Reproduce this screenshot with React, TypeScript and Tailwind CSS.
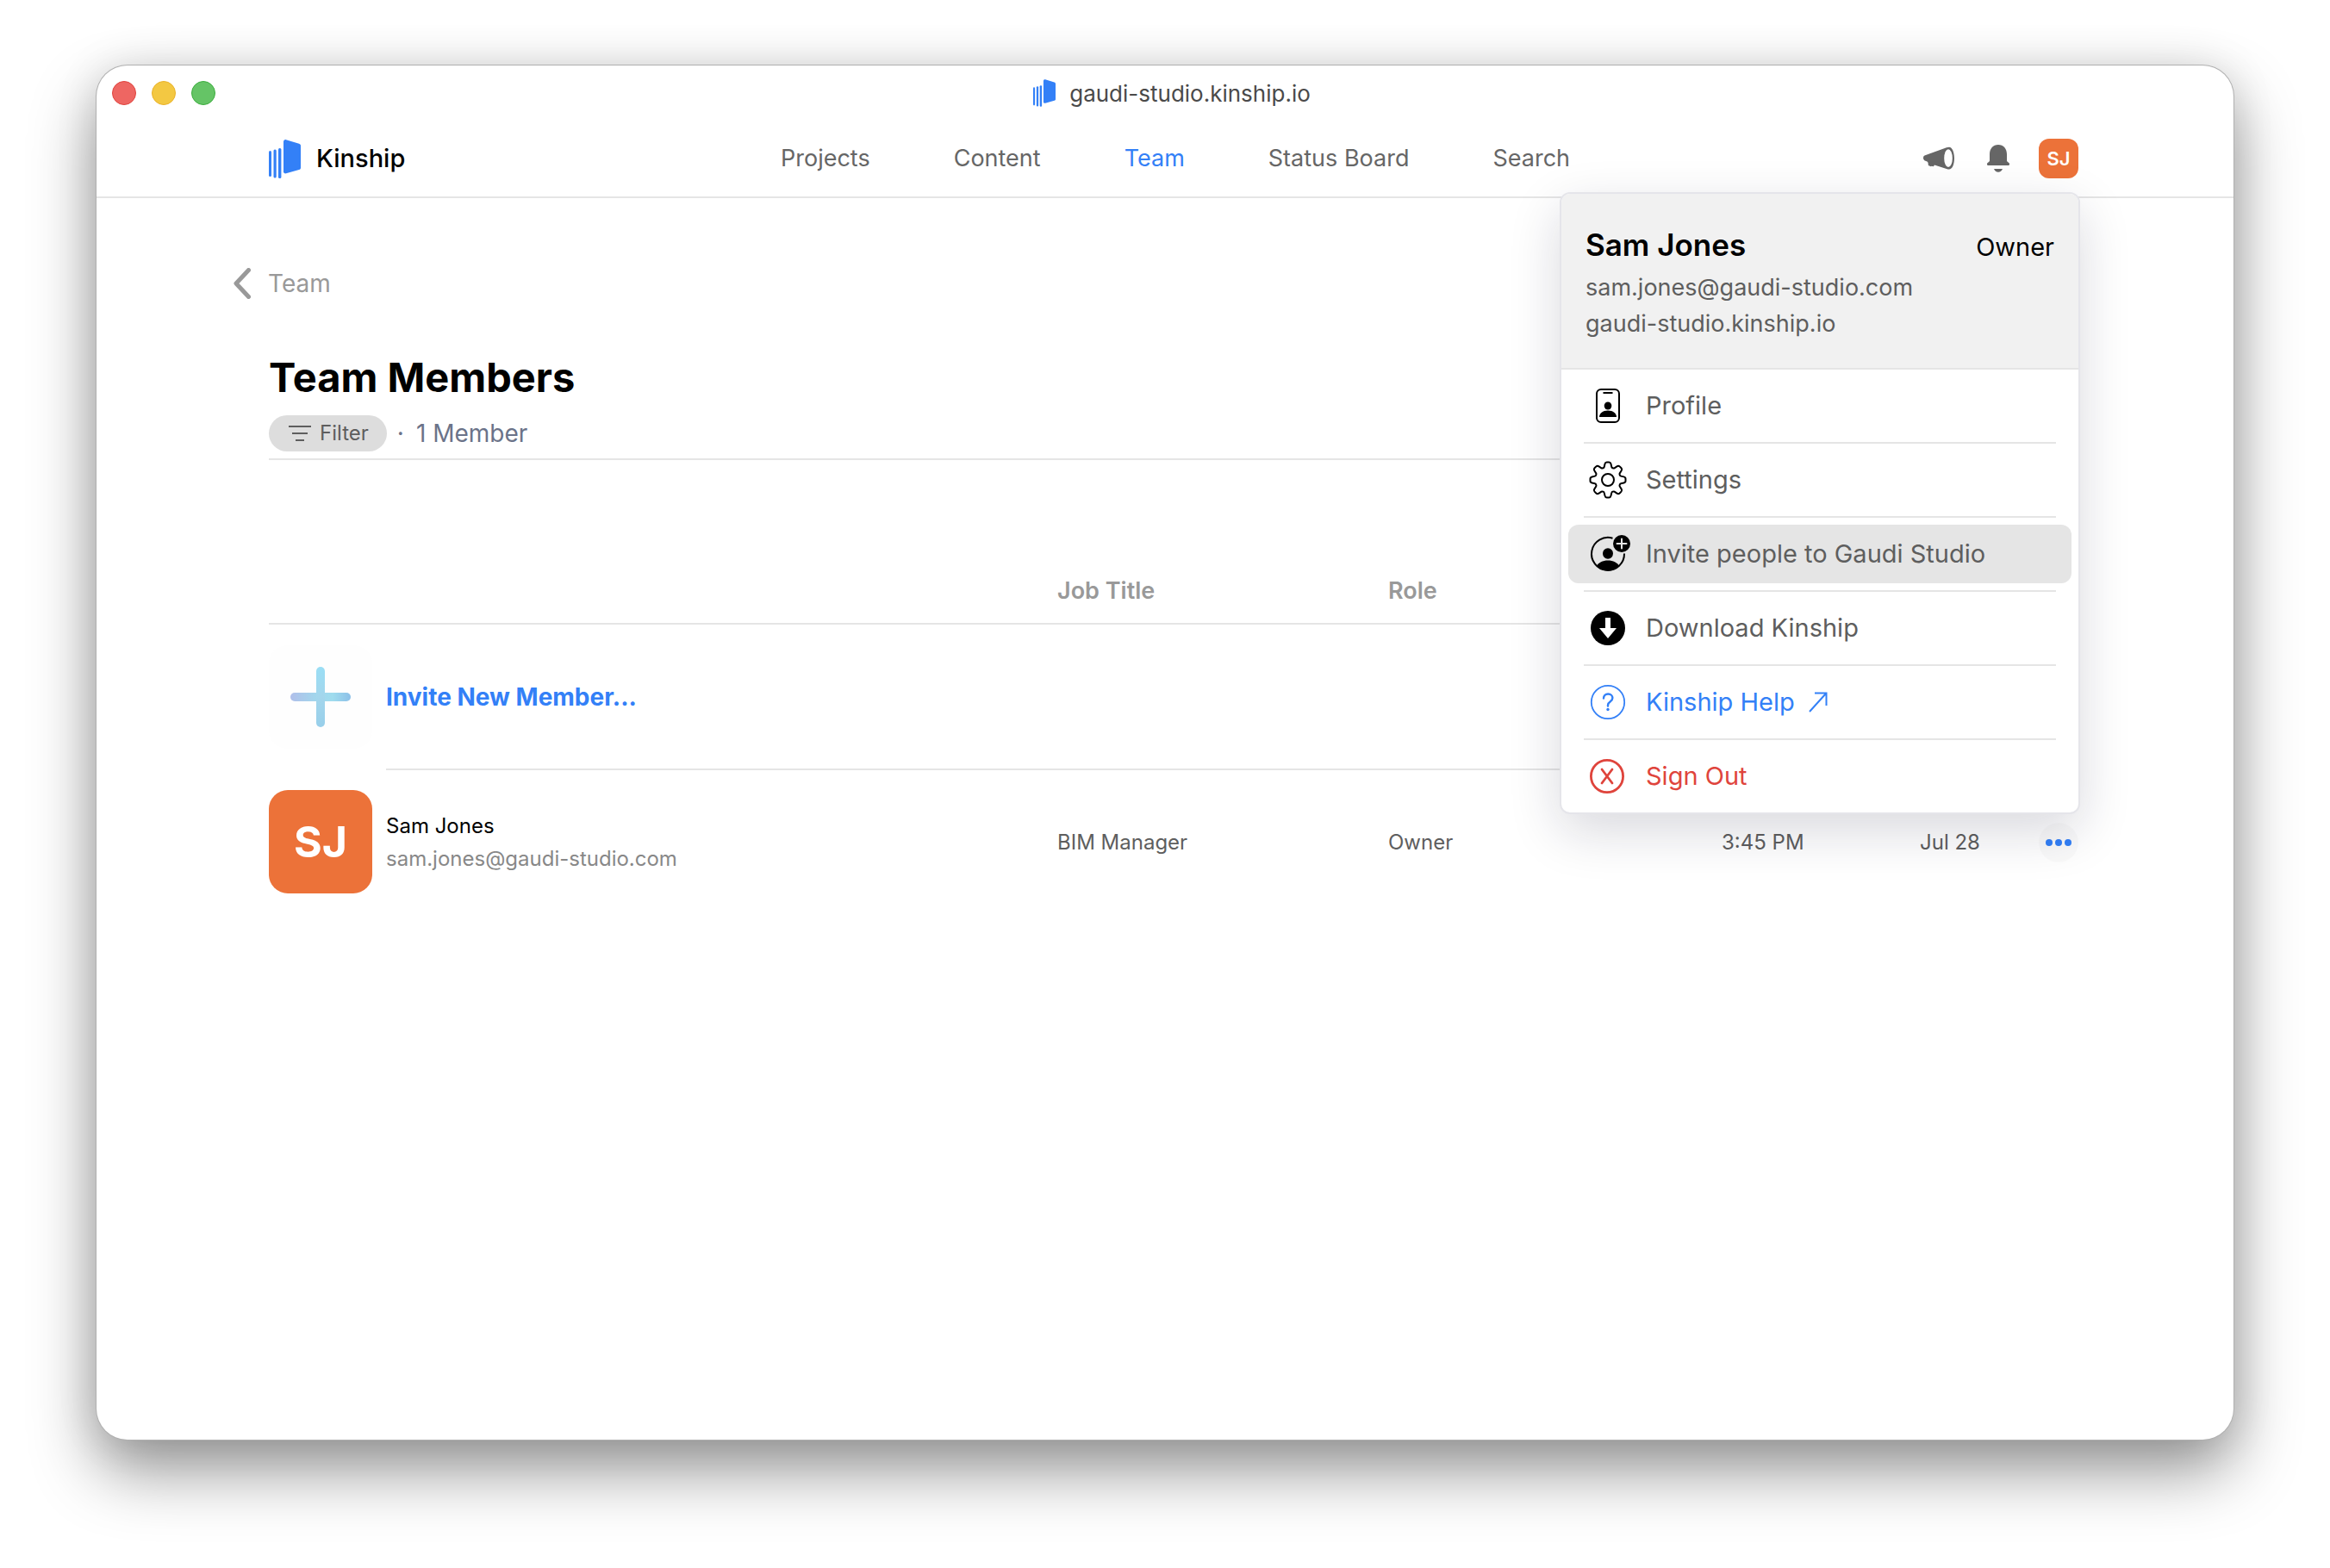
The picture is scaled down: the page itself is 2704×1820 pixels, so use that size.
import type { ReactNode } from "react";

type MenuItem = {
    label: string;
    icon: ReactNode;
    color: string;
    active?: boolean;
    external?: boolean;
};

const navLinks = ["Projects", "Content", "Team", "Status Board", "Search"];

function KinshipLogo({ className }: { className: string }) {
    return (
        <svg viewBox="0 0 37 45" className={className} fill="#3380f7" aria-hidden="true">
            <rect x="0" y="13" width="3" height="30" rx="1.5" />
            <rect x="5.5" y="11.500" width="3.200" height="33" rx="1.5" />
            <rect x="11" y="10" width="3.400" height="35" rx="1.5" />
            <path d="M17 2.500C17 .8 18.500-.2 20 .2L35 4.800C36.300 5.200 37 6 37 7.300V32.500C37 33.800 36.300 34.700 35 35.100L20 39.300C18.500 39.700 17 38.800 17 37.200Z" />
        </svg>
    );
}

function MegaphoneIcon() {
    return (
        <svg viewBox="0 0 36 28" className="w-9 h-7" aria-hidden="true">
            <path d="M1.500 10.500 27 1.300C28 1 29 .8 30 .8c3.500 0 6 5.700 6 13s-2.500 12.800-6 12.800c-1 0-2-.2-3-.6L13 21.500l-1.200 1.800-2-.6-.9.500-3-1.300-.4-3.200-1-1.300-2-.6C.8 16 0 14.900 0 13.500c0-1.500.5-2.600 1.500-3Z" fill="#666" />
            <ellipse cx="29" cy="13.700" rx="4.800" ry="10.400" fill="#fff" />
        </svg>
    );
}

function BellIcon() {
    return (
        <svg viewBox="0 0 26 32" className="w-[26px] h-8" fill="#666" aria-hidden="true">
            <path d="M3 11C3 4.500 7 0 13 0s10 4.500 10 11v7c0 1 .3 1.500 1 2l1.300 1c1.300 1.200.7 3-.8 3h-23c-1.500 0-2.100-1.800-.8-3L2 20c.7-.5 1-1 1-2Z" />
            <path d="M8 28h10c-.8 2.300-2.800 3.800-5 3.800S8.800 30.300 8 28Z" />
        </svg>
    );
}

function BadgeIcon() {
    return (
        <svg viewBox="0 0 48 48" className="w-12 h-12" fill="none" aria-hidden="true">
            <rect x="11" y="5" width="26" height="38" rx="5" stroke="#000" strokeWidth="2" />
            <path d="M18.500 9h11" stroke="#000" strokeWidth="2" />
            <ellipse cx="24" cy="24" rx="4.300" ry="4.600" fill="#000" />
            <path d="M14 37c0-4 4-7.500 10-7.500S34 33 34 37Z" fill="#000" />
        </svg>
    );
}

function GearIcon() {
    return (
        <svg viewBox="0 0 48 48" className="w-12 h-12" fill="none" stroke="#000" strokeWidth="2" strokeLinejoin="round" aria-hidden="true">
            <path d="M20.500 5.500c.3-1.300 1-2 2.200-2h2.600c1.200 0 1.900.7 2.200 2l.8 3.500c.2 1 2.300 1.900 3.200 1.300l3-2c1.200-.8 2.200-.7 3.100.1l1.900 1.900c.9.900.9 1.900.2 3l-2 3.100c-.6.900.3 3 1.300 3.200l3.400.8c1.400.3 2.100 1 2.100 2.300v2.600c0 1.200-.7 1.900-2.100 2.200l-3.400.8c-1 .2-1.900 2.300-1.300 3.200l2 3.100c.7 1.100.7 2.100-.2 3l-1.900 1.900c-.9.800-1.900.9-3.100.1l-3-2c-.9-.6-3 .3-3.200 1.300l-.8 3.500c-.3 1.300-1 2-2.200 2h-2.600c-1.200 0-1.900-.7-2.200-2l-.8-3.500c-.2-1-2.300-1.900-3.200-1.300l-3 2c-1.200.8-2.200.7-3.100-.1l-1.900-1.900c-.9-.9-.9-1.900-.2-3l2-3.100c.6-.9-.3-3-1.300-3.200l-3.400-.8c-1.400-.3-2.100-1-2.100-2.200v-2.600c0-1.300.7-2 2.100-2.300l3.400-.8c1-.2 1.900-2.300 1.300-3.200l-2-3.100c-.7-1.100-.7-2.100.2-3l1.900-1.900c.9-.8 1.900-.9 3.100-.1l3 2c.9.600 3-.3 3.200-1.300Z" />
            <circle cx="24" cy="24" r="7" />
        </svg>
    );
}

function InviteIcon() {
    return (
        <svg viewBox="0 0 48 48" className="w-12 h-12 overflow-visible" fill="none" aria-hidden="true">
            <path d="M29.500 5.700A19 19 0 1 0 43 23.500" stroke="#000" strokeWidth="2" />
            <ellipse cx="24" cy="23.500" rx="6" ry="6.200" fill="#000" />
            <path d="M11 38c2-4 7-6.500 13-6.500S35 34 37 38c-3.500 3.500-8 5.500-13 5.500S14.500 41.500 11 38Z" fill="#000" />
            <circle cx="40" cy="12" r="10" fill="#000" />
            <path d="M40 6.500v11M34.500 12h11" stroke="#e5e5e5" strokeWidth="2" strokeLinecap="round" />
        </svg>
    );
}

function DownloadIcon() {
    return (
        <svg viewBox="0 0 48 48" className="w-12 h-12" aria-hidden="true">
            <circle cx="24" cy="24" r="20" fill="#000" />
            <path d="M21 12h6v12h7L24 36 14 24h7Z" fill="#fff" />
        </svg>
    );
}

function HelpIcon() {
    return (
        <svg viewBox="0 0 48 48" className="w-12 h-12" fill="none" stroke="#3380f7" aria-hidden="true">
            <circle cx="24" cy="24" r="19.200" strokeWidth="1.800" />
            <path d="M19 19.500c0-3 2.200-5 5.200-5s5.200 1.900 5.200 4.600c0 2.200-1.200 3.300-2.800 4.400-1.800 1.200-2.600 2.200-2.600 4v1" strokeWidth="2.400" strokeLinecap="round" />
            <circle cx="24" cy="32.500" r="1.700" fill="#3380f7" stroke="none" />
        </svg>
    );
}

function SignOutIcon() {
    return (
        <svg viewBox="0 0 48 48" className="w-12 h-12" fill="none" stroke="#df443c" aria-hidden="true">
            <circle cx="23" cy="24" r="18.600" strokeWidth="2.800" />
            <path d="M17 16l12 16M29 16 17 32" strokeWidth="2.800" strokeLinecap="round" />
        </svg>
    );
}

const menuItems: MenuItem[] = [
    { label: "Profile", icon: <BadgeIcon />, color: "text-[#5e5e5e]" },
    { label: "Settings", icon: <GearIcon />, color: "text-[#5e5e5e]" },
    { label: "Invite people to Gaudi Studio", icon: <InviteIcon />, color: "text-[#5e5e5e]", active: true },
    { label: "Download Kinship", icon: <DownloadIcon />, color: "text-[#5e5e5e]" },
    { label: "Kinship Help", icon: <HelpIcon />, color: "text-[#3380f7]", external: true },
    { label: "Sign Out", icon: <SignOutIcon />, color: "text-[#df443c]" },
];

function AccountMenu() {
    return (
        <div className="absolute -right-[2px] top-full mt-4 z-10 w-[604px] rounded-xl border-2 border-[#e5e5ea] bg-white overflow-hidden shadow-[0_20px_60px_0_rgba(20,20,50,0.16)]">

            <div className="bg-[#f1f1f1] border-b-2 border-[#e5e5e5] px-7 pt-[38px] pb-[30px]">
                <div className="h-[42px] flex items-baseline justify-between leading-[42px]">
                    <h2 className="text-[35px] leading-[42px] font-semibold">Sam Jones</h2>
                    <span className="text-[29px] leading-[42px]">Owner</span>
                </div>
                <p className="mt-2 text-[27px] leading-[42px] text-[#5e5e5e]">sam.jones@gaudi-studio.com</p>
                <p className="text-[27px] leading-[42px] text-[#5e5e5e]">gaudi-studio.kinship.io</p>
            </div>

            <ul className="px-2">
                {menuItems.map((item, i) => (
                    <li key={item.label}>
                        {i > 0 && <div className="mx-[18px] h-[2px] bg-[#e5e5e5]" />}
                        <button
                            className={`my-2 w-full h-[68px] px-[22px] flex items-center gap-5 rounded-xl text-[29px] ${item.color} ${item.active ? "bg-[#e5e5e5]" : ""}`}
                        >
                            {item.icon}
                            <span>{item.label}</span>
                            {item.external && (
                                <svg viewBox="0 0 22 26" className="-ml-1 w-[22px] h-[26px]" fill="none" stroke="#3380f7" strokeWidth="2" aria-hidden="true">
                                    <path d="M1 24 20 3M7 2.500h13.500V17" />
                                </svg>
                            )}
                        </button>
                    </li>
                ))}
            </ul>

        </div>
    );
}

function App() {
    return (

        <div className="min-h-screen bg-white px-28 pt-[76px] pb-[149px] flex font-['Inter',sans-serif] text-black">

            <div className="flex-1 flex flex-col rounded-[36px] bg-white shadow-[0_0_0_1px_#b0b0b0,0_36px_76px_0_rgba(0,0,0,0.42),0_0_50px_rgba(0,0,0,0.1)]">

                <div className="relative h-16 flex items-center justify-center gap-4 pl-4">
                    <div className="absolute left-[18px] flex gap-[18px]">
                        <span className="w-7 h-7 rounded-full border border-[#e0443e] bg-[#ee6662]" />
                        <span className="w-7 h-7 rounded-full border border-[#eab22a] bg-[#f3c842]" />
                        <span className="w-7 h-7 rounded-full border border-[#3dae3f] bg-[#65c466]" />
                    </div>
                    <KinshipLogo className="w-[26px] h-8" />
                    <span className="text-[26px] text-[#4a4a4a]">gaudi-studio.kinship.io</span>
                </div>

                <header className="h-[90px] border-b-2 border-[#e5e5e5] pl-[200px] pr-[180px] flex items-center justify-between">
                    <a href="#" className="w-[594px] flex items-center gap-[18px]">
                        <KinshipLogo className="w-[37px] h-[45px]" />
                        <span className="text-[29px] font-medium">Kinship</span>
                    </a>
                    <nav className="flex-1 flex gap-[97px] text-[27px]">
                        {navLinks.map((link) => (
                            <a key={link} href="#" className={link === "Team" ? "text-[#3380f7]" : "text-[#666]"}>
                                {link}
                            </a>
                        ))}
                    </nav>
                    <div className="relative flex items-center">
                        <button aria-label="Announcements" className="mr-[38px]"><MegaphoneIcon /></button>
                        <button aria-label="Notifications" className="mr-[34px]"><BellIcon /></button>
                        <button className="w-[46px] h-[46px] rounded-xl bg-[#ec7239] text-white text-[22px] font-semibold">SJ</button>
                        <AccountMenu />
                    </div>
                </header>

                <main className="pl-[200px] pr-[180px] pt-[76px] flex-1">

                    <a href="#" className="-ml-[41px] flex items-center gap-5 text-[28px] leading-[46px] text-[#999]">
                        <svg viewBox="0 0 20 36" className="w-5 h-9" fill="none" stroke="#999" strokeWidth="5" strokeLinecap="round" strokeLinejoin="round" aria-hidden="true">
                            <path d="M17.500 2.500 3 18l14.500 15.500" />
                        </svg>
                        Team
                    </a>

                    <h1 className="mt-[54px] text-[47px] leading-[64px] font-bold">Team Members</h1>

                    <div className="mt-3 pb-2 border-b-2 border-[#e5e5e5] flex items-center text-[28px] text-[#6b7389]">
                        <button className="h-[42px] pl-[23px] pr-[21px] rounded-full bg-[#ddd] text-[#5e5e5e] text-[24px] flex items-center gap-[10px]">
                            <svg viewBox="0 0 26 20" className="w-[26px] h-5" stroke="#5e5e5e" strokeWidth="2" aria-hidden="true">
                                <path d="M0 2h26M4 10h18M8 18h10" />
                            </svg>
                            Filter
                        </button>
                        <span className="ml-3 leading-[42px]">·</span>
                        <span className="ml-[14px] leading-[42px]">1 Member</span>
                    </div>

                    <table className="mt-[108px] w-full table-fixed text-left text-[24px] text-[#5e5e5e]">
                        <thead>
                            <tr className="h-[82px] border-b-2 border-[#e5e5e5] text-[27px] text-[#999]">
                                <th className="w-[136px]"></th>
                                <th></th>
                                <th className="w-[384px] pt-2 font-semibold">Job Title</th>
                                <th className="w-[387px] pt-2 font-semibold">Role</th>
                                <th className="w-[230px]"></th>
                                <th className="w-[138px]"></th>
                                <th className="w-[46px]"></th>
                            </tr>
                        </thead>
                        <tbody>
                            <tr className="h-[169px]">
                                <td>
                                    <div className="w-[120px] h-[120px] rounded-[22px] bg-[#fefefe] flex items-center justify-center">
                                        <svg viewBox="0 0 70 70" className="w-[70px] h-[70px]" aria-hidden="true">
                                            <defs>
                                                <linearGradient id="plus-h" x1="0" x2="1">
                                                    <stop offset="0" stopColor="#b0bfea" />
                                                    <stop offset=".4" stopColor="#a2d5ec" />
                                                    <stop offset=".7" stopColor="#9fdcee" />
                                                    <stop offset="1" stopColor="#8cc0e8" />
                                                </linearGradient>
                                                <linearGradient id="plus-v" x1="0" x2="0" y1="0" y2="1">
                                                    <stop offset="0" stopColor="#9adef5" />
                                                    <stop offset=".5" stopColor="#a3d6ec" />
                                                    <stop offset="1" stopColor="#98cfea" />
                                                </linearGradient>
                                            </defs>
                                            <rect x="0" y="30" width="70" height="10" rx="5" fill="url(#plus-h)" />
                                            <rect x="30" y="0" width="10" height="70" rx="5" fill="url(#plus-v)" />
                                        </svg>
                                    </div>
                                </td>
                                <td colSpan={6} className="border-b-2 border-[#e5e5e5]">
                                    <button className="text-[28px] font-bold text-[#3380f7]">Invite New Member...</button>
                                </td>
                            </tr>
                            <tr className="h-[168px]">
                                <td>
                                    <div className="w-[120px] h-[120px] rounded-[22px] bg-[#ec7239] text-white text-[50px] font-bold flex items-center justify-center">
                                        SJ
                                    </div>
                                </td>
                                <td className="leading-[38px]">
                                    <p className="text-black">Sam Jones</p>
                                    <p className="text-[#888]">sam.jones@gaudi-studio.com</p>
                                </td>
                                <td>BIM Manager</td>
                                <td>Owner</td>
                                <td>3:45 PM</td>
                                <td>Jul 28</td>
                                <td>
                                    <button aria-label="More actions" className="w-[46px] h-[46px] rounded-full bg-black/2 flex items-center justify-center gap-[3px]">
                                        <span className="w-2 h-2 rounded-full bg-[#3380f7]" />
                                        <span className="w-2 h-2 rounded-full bg-[#3380f7]" />
                                        <span className="w-2 h-2 rounded-full bg-[#3380f7]" />
                                    </button>
                                </td>
                            </tr>
                        </tbody>
                    </table>

                </main>

            </div>

        </div>

    );
}

export default App;
